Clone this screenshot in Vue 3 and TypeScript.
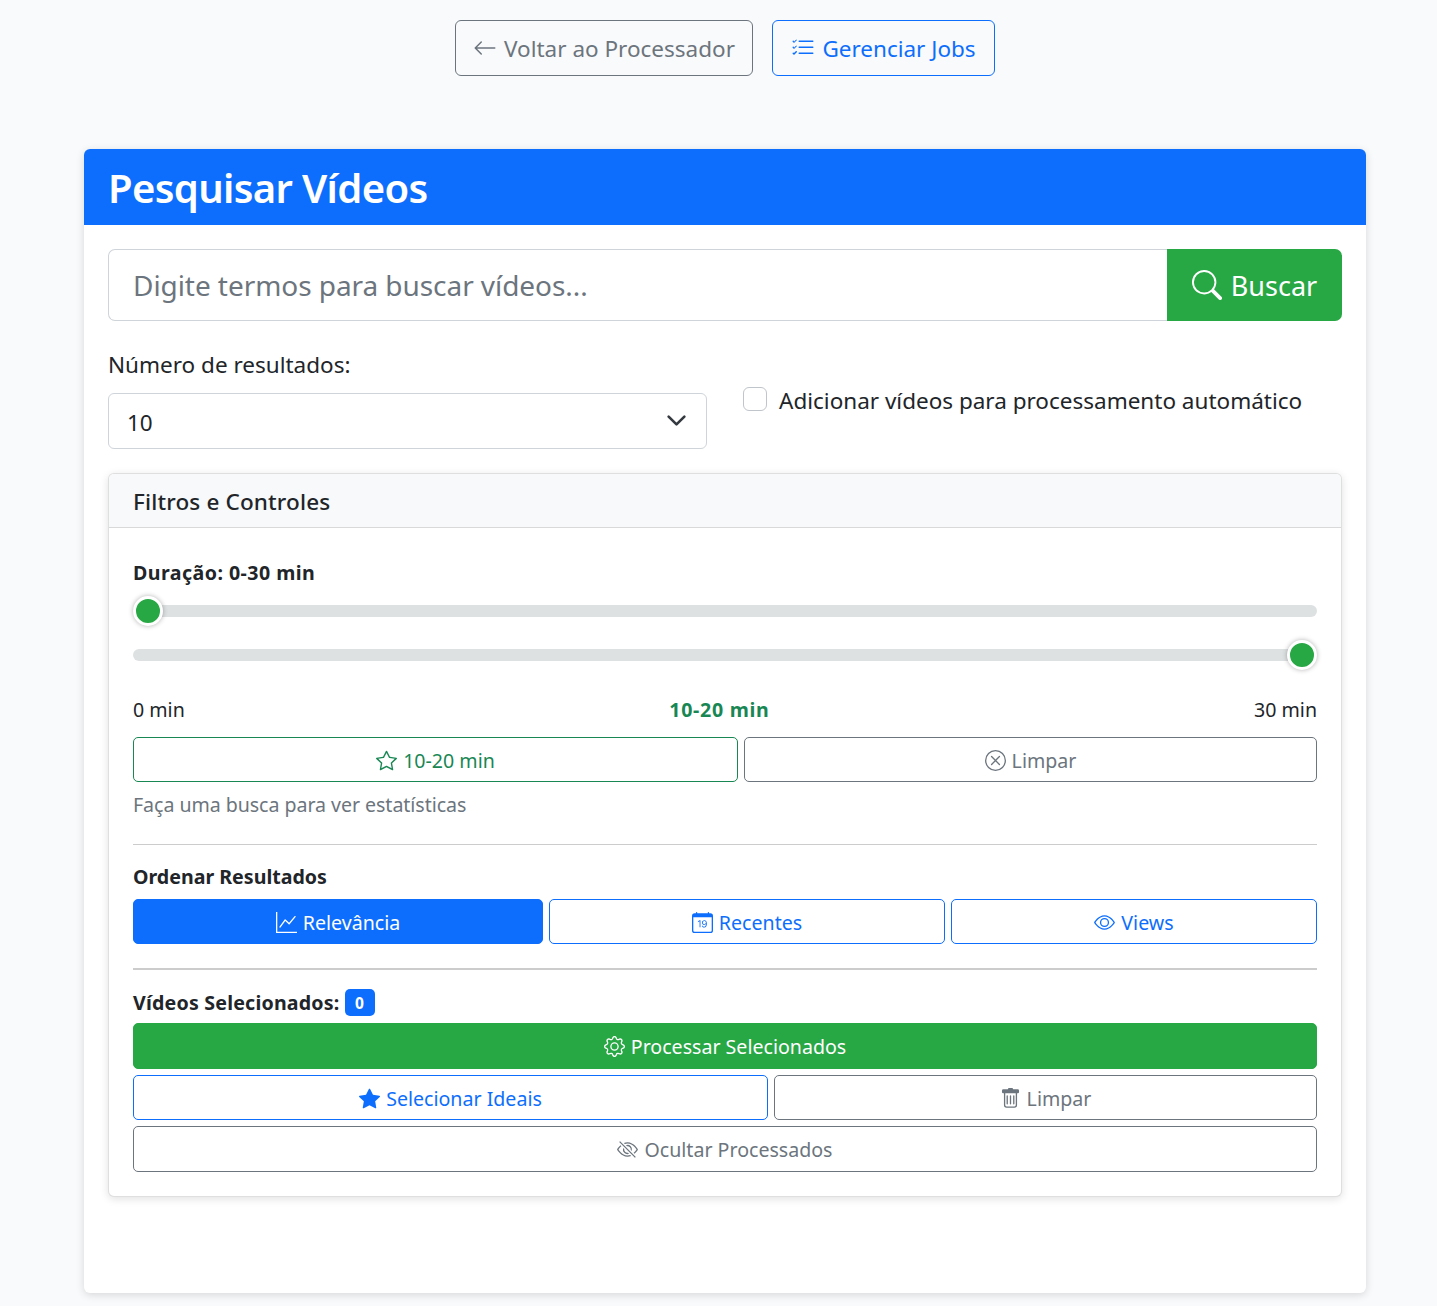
<script setup lang="ts">
const P = {
  arrow: ['M15 8a.5.5 0 0 0-.5-.5H2.707l3.147-3.146a.5.5 0 1 0-.708-.708l-4 4a.5.5 0 0 0 0 .708l4 4a.5.5 0 0 0 .708-.708L2.707 8.5H14.5A.5.5 0 0 0 15 8z'],
  list: ['M5 11.5a.5.5 0 0 1 .5-.5h9a.5.5 0 0 1 0 1h-9a.5.5 0 0 1-.5-.5zm0-4a.5.5 0 0 1 .5-.5h9a.5.5 0 0 1 0 1h-9a.5.5 0 0 1-.5-.5zm0-4a.5.5 0 0 1 .5-.5h9a.5.5 0 0 1 0 1h-9a.5.5 0 0 1-.5-.5zM3.854 2.146a.5.5 0 0 1 0 .708l-1.5 1.5a.5.5 0 0 1-.708 0l-.5-.5a.5.5 0 1 1 .708-.708L2 3.793l1.146-1.147a.5.5 0 0 1 .708 0zm0 4a.5.5 0 0 1 0 .708l-1.5 1.5a.5.5 0 0 1-.708 0l-.5-.5a.5.5 0 1 1 .708-.708L2 7.793l1.146-1.147a.5.5 0 0 1 .708 0zm0 4a.5.5 0 0 1 0 .708l-1.5 1.5a.5.5 0 0 1-.708 0l-.5-.5a.5.5 0 0 1 .708-.708l.146.147 1.146-1.147a.5.5 0 0 1 .708 0z'],
  search: ['M11.742 10.344a6.5 6.5 0 1 0-1.397 1.398h-.001c.03.04.062.078.098.115l3.85 3.85a1 1 0 0 0 1.415-1.414l-3.85-3.85a1.007 1.007 0 0 0-.115-.1zM12 6.5a5.5 5.5 0 1 1-11 0 5.5 5.5 0 0 1 11 0z'],
  star: ['M2.866 14.85c-.078.444.36.791.746.593l4.39-2.256 4.389 2.256c.386.198.824-.149.746-.592l-.83-4.73 3.522-3.356c.33-.314.16-.888-.282-.95l-4.898-.696L8.465.792a.513.513 0 0 0-.927 0L5.354 5.12l-4.898.696c-.441.062-.612.636-.283.95l3.523 3.356-.83 4.73zm4.905-2.767-3.686 1.894.694-3.957a.565.565 0 0 0-.163-.505L1.71 6.745l4.052-.576a.525.525 0 0 0 .393-.288L8 2.223l1.847 3.658a.525.525 0 0 0 .393.288l4.052.575-2.906 2.77a.565.565 0 0 0-.163.506l.694 3.957-3.686-1.894a.503.503 0 0 0-.461 0z'],
  starFill: ['M3.612 15.443c-.386.198-.824-.149-.746-.592l.83-4.73L.173 6.765c-.329-.314-.158-.888.283-.95l4.898-.696L7.538.792c.197-.39.73-.39.927 0l2.184 4.327 4.898.696c.441.062.612.636.282.95l-3.522 3.356.83 4.73c.078.443-.36.79-.746.592L8 13.187l-4.389 2.256z'],
  xCircle: ['M8 15A7 7 0 1 1 8 1a7 7 0 0 1 0 14zm0 1A8 8 0 1 0 8 0a8 8 0 0 0 0 16z', 'M4.646 4.646a.5.5 0 0 1 .708 0L8 7.293l2.646-2.647a.5.5 0 0 1 .708.708L8.707 8l2.647 2.646a.5.5 0 0 1-.708.708L8 8.707l-2.646 2.647a.5.5 0 0 1-.708-.708L7.293 8 4.646 5.354a.5.5 0 0 1 0-.708z'],
  graph: ['M0 0h1v15h15v1H0V0Zm14.817 3.113a.5.5 0 0 1 .07.704l-4.5 5.5a.5.5 0 0 1-.74.037L7.06 6.767l-3.656 5.027a.5.5 0 0 1-.808-.588l4-5.5a.5.5 0 0 1 .758-.06l2.609 2.61 4.15-5.073a.5.5 0 0 1 .704-.07Z'],
  calendar: ['M6.445 11.688V6.354h-.633A12.6 12.6 0 0 0 4.5 7.16v.695c.375-.257.969-.62 1.258-.777h.012v4.61h.675zm1.188-1.305c.047.64.594 1.406 1.703 1.406 1.258 0 2-1.066 2-2.871 0-1.934-.781-2.668-1.953-2.668-.926 0-1.797.672-1.797 1.809 0 1.16.824 1.77 1.676 1.77.746 0 1.23-.376 1.383-.79h.027c-.004 1.316-.461 2.164-1.305 2.164-.664 0-1.008-.45-1.05-.82h-.684zm2.953-2.317c0 .696-.559 1.18-1.184 1.18-.601 0-1.144-.383-1.144-1.2 0-.823.582-1.21 1.168-1.21.633 0 1.16.398 1.16 1.23z', 'M3.5 0a.5.5 0 0 1 .5.5V1h8V.5a.5.5 0 0 1 1 0V1h1a2 2 0 0 1 2 2v11a2 2 0 0 1-2 2H2a2 2 0 0 1-2-2V3a2 2 0 0 1 2-2h1V.5a.5.5 0 0 1 .5-.5zM1 4v10a1 1 0 0 0 1 1h12a1 1 0 0 0 1-1V4H1z'],
  eye: ['M16 8s-3-5.5-8-5.5S0 8 0 8s3 5.5 8 5.5S16 8 16 8zM1.173 8a13.133 13.133 0 0 1 1.66-2.043C4.12 4.668 5.88 3.5 8 3.5c2.12 0 3.879 1.168 5.168 2.457A13.133 13.133 0 0 1 14.828 8c-.058.087-.122.183-.195.288-.335.48-.83 1.12-1.465 1.755C11.879 11.332 10.119 12.5 8 12.5c-2.12 0-3.879-1.168-5.168-2.457A13.134 13.134 0 0 1 1.172 8z', 'M8 5.5a2.5 2.5 0 1 0 0 5 2.5 2.5 0 0 0 0-5zM4.5 8a3.5 3.5 0 1 1 7 0 3.5 3.5 0 0 1-7 0z'],
  gear: ['M8 4.754a3.246 3.246 0 1 0 0 6.492 3.246 3.246 0 0 0 0-6.492zM5.754 8a2.246 2.246 0 1 1 4.492 0 2.246 2.246 0 0 1-4.492 0z', 'M9.796 1.343c-.527-1.79-3.065-1.79-3.592 0l-.094.319a.873.873 0 0 1-1.255.52l-.292-.16c-1.64-.892-3.433.902-2.54 2.541l.159.292a.873.873 0 0 1-.52 1.255l-.319.094c-1.79.527-1.79 3.065 0 3.592l.319.094a.873.873 0 0 1 .52 1.255l-.16.292c-.892 1.64.901 3.434 2.541 2.54l.292-.159a.873.873 0 0 1 1.255.52l.094.319c.527 1.79 3.065 1.79 3.592 0l.094-.319a.873.873 0 0 1 1.255-.52l.292.16c1.64.893 3.434-.902 2.54-2.541l-.159-.292a.873.873 0 0 1 .52-1.255l.319-.094c1.79-.527 1.79-3.065 0-3.592l-.319-.094a.873.873 0 0 1-.52-1.255l.16-.292c.893-1.64-.902-3.433-2.541-2.54l-.292.159a.873.873 0 0 1-1.255-.52l-.094-.319zm-2.633.283c.246-.835 1.428-.835 1.674 0l.094.319a1.873 1.873 0 0 0 2.693 1.115l.291-.16c.764-.415 1.6.42 1.184 1.185l-.159.292a1.873 1.873 0 0 0 1.116 2.692l.318.094c.835.246.835 1.428 0 1.674l-.319.094a1.873 1.873 0 0 0-1.115 2.693l.16.291c.415.764-.42 1.6-1.185 1.184l-.291-.159a1.873 1.873 0 0 0-2.693 1.116l-.094.318c-.246.835-1.428.835-1.674 0l-.094-.319a1.873 1.873 0 0 0-2.692-1.115l-.292.16c-.764.415-1.6-.42-1.184-1.185l.159-.291A1.873 1.873 0 0 0 1.945 8.93l-.319-.094c-.835-.246-.835-1.428 0-1.674l.319-.094A1.873 1.873 0 0 0 3.06 4.377l-.16-.292c-.415-.764.42-1.6 1.185-1.184l.292.159a1.873 1.873 0 0 0 2.692-1.115l.094-.319z'],
  trash: ['M5.5 5.5A.5.5 0 0 1 6 6v6a.5.5 0 0 1-1 0V6a.5.5 0 0 1 .5-.5zm2.5 0a.5.5 0 0 1 .5.5v6a.5.5 0 0 1-1 0V6a.5.5 0 0 1 .5-.5zm3 .5a.5.5 0 0 0-1 0v6a.5.5 0 0 0 1 0V6z', 'M14.5 3a1 1 0 0 1-1 1H13v9a2 2 0 0 1-2 2H5a2 2 0 0 1-2-2V4h-.5a1 1 0 0 1-1-1V2a1 1 0 0 1 1-1H6a1 1 0 0 1 1-1h2a1 1 0 0 1 1 1h3.5a1 1 0 0 1 1 1v1zM4.118 4 4 4.059V13a1 1 0 0 0 1 1h6a1 1 0 0 0 1-1V4.059L11.882 4H4.118zM2.5 3V2h11v1h-11z'],
  eyeSlash: ['M13.359 11.238C15.06 9.72 16 8 16 8s-3-5.5-8-5.5a7.028 7.028 0 0 0-2.79.588l.77.771A5.944 5.944 0 0 1 8 3.5c2.12 0 3.879 1.168 5.168 2.457A13.134 13.134 0 0 1 14.828 8c-.058.087-.122.183-.195.288-.335.48-.83 1.12-1.465 1.755-.165.165-.337.328-.517.486l.708.709z', 'M11.297 9.176a3.5 3.5 0 0 0-4.474-4.474l.823.823a2.5 2.5 0 0 1 2.829 2.829l.822.822zm-2.943 1.299.822.822a3.5 3.5 0 0 1-4.474-4.474l.823.823a2.5 2.5 0 0 0 2.829 2.829z', 'M3.35 5.47c-.18.16-.353.322-.518.487A13.134 13.134 0 0 0 1.172 8l.195.288c.335.48.83 1.12 1.465 1.755C4.121 11.332 5.881 12.5 8 12.5c.716 0 1.39-.133 2.02-.36l.77.772A7.029 7.029 0 0 1 8 13.5C3 13.5 0 8 0 8s.939-1.721 2.641-3.238l.708.709zm10.296 8.884-12-12 .708-.708 12 12-.708.708z'],
}
</script>

<template>
  <div class="page">
    <nav class="topnav">
      <a class="btn top gray">
        <svg class="ic i24" viewBox="0 0 16 16"><path v-for="d in P.arrow" :key="d" :d="d" /></svg>
        <span>Voltar ao Processador</span>
      </a>
      <a class="btn top blue">
        <svg class="ic i24" viewBox="0 0 16 16"><path v-for="d in P.list" :key="d" :d="d" /></svg>
        <span>Gerenciar Jobs</span>
      </a>
    </nav>

    <main class="card">
      <header class="card-head"><h1>Pesquisar Vídeos</h1></header>
      <div class="card-body">
        <div class="search">
          <input class="search-input" type="text" placeholder="Digite termos para buscar vídeos..." />
          <button class="search-btn" type="button">
            <svg class="ic i30" viewBox="0 0 16 16"><path v-for="d in P.search" :key="d" :d="d" /></svg>
            <span>Buscar</span>
          </button>
        </div>

        <div class="opts">
          <div class="opt-left">
            <label class="lbl">Número de resultados:</label>
            <div class="select-wrap">
              <select class="select"><option>10</option></select>
              <svg class="chev" viewBox="0 0 16 16"><path fill="none" stroke="#343a40" stroke-linecap="round" stroke-linejoin="round" stroke-width="2" d="m2 5 6 6 6-6" /></svg>
            </div>
          </div>
          <label class="check">
            <input type="checkbox" />
            <span>Adicionar vídeos para processamento automático</span>
          </label>
        </div>

        <section class="panel">
          <header class="panel-head">Filtros e Controles</header>
          <div class="panel-body">
            <div class="strong dur">Duração: 0-30 min</div>
            <div class="sliders">
              <input class="range" type="range" min="0" max="30" value="0" />
              <input class="range" type="range" min="0" max="30" value="30" />
            </div>
            <div class="scale">
              <span>0 min</span><strong>10-20 min</strong><span>30 min</span>
            </div>
            <div class="row r-dur">
              <button class="btn sm green" type="button">
                <svg class="ic i21" viewBox="0 0 16 16"><path v-for="d in P.star" :key="d" :d="d" /></svg>
                <span>10-20 min</span>
              </button>
              <button class="btn sm gray" type="button">
                <svg class="ic i21" viewBox="0 0 16 16"><path v-for="d in P.xCircle" :key="d" :d="d" /></svg>
                <span>Limpar</span>
              </button>
            </div>
            <p class="muted">Faça uma busca para ver estatísticas</p>
            <hr class="hr1" />
            <div class="strong ord">Ordenar Resultados</div>
            <div class="row r-ord">
              <button class="btn sm solid-blue" type="button">
                <svg class="ic i21" viewBox="0 0 16 16"><path v-for="d in P.graph" :key="d" :d="d" /></svg>
                <span>Relevância</span>
              </button>
              <button class="btn sm blue" type="button">
                <svg class="ic i21" viewBox="0 0 16 16"><path v-for="d in P.calendar" :key="d" :d="d" /></svg>
                <span>Recentes</span>
              </button>
              <button class="btn sm blue" type="button">
                <svg class="ic i21" viewBox="0 0 16 16"><path v-for="d in P.eye" :key="d" :d="d" /></svg>
                <span>Views</span>
              </button>
            </div>
            <hr class="hr2" />
            <div class="sel-title">
              <span class="strong sel-text">Vídeos Selecionados:</span>
              <span class="badge">0</span>
            </div>
            <button class="btn sm solid-green full tall" type="button">
              <svg class="ic i21" viewBox="0 0 16 16"><path v-for="d in P.gear" :key="d" :d="d" /></svg>
              <span>Processar Selecionados</span>
            </button>
            <div class="row r-sel">
              <button class="btn sm blue" type="button">
                <svg class="ic i21" viewBox="0 0 16 16"><path v-for="d in P.starFill" :key="d" :d="d" /></svg>
                <span>Selecionar Ideais</span>
              </button>
              <button class="btn sm gray" type="button">
                <svg class="ic i21" viewBox="0 0 16 16"><path v-for="d in P.trash" :key="d" :d="d" /></svg>
                <span>Limpar</span>
              </button>
            </div>
            <button class="btn sm gray full tall" type="button">
              <svg class="ic i21" viewBox="0 0 16 16"><path v-for="d in P.eyeSlash" :key="d" :d="d" /></svg>
              <span>Ocultar Processados</span>
            </button>
          </div>
        </section>
      </div>
    </main>
  </div>
</template>

<style>
html, body { margin: 0; background: #f9fafc; }
</style>

<style scoped>
* { box-sizing: border-box; }
.page {
  height: 1306px;
  padding: 20px 71px 0 84px;
  background: #f9fafc;
  color: #212529;
  font-family: "Noto Sans", "Open Sans", sans-serif;
  font-size: 22.5px;
  overflow: hidden;
}
.ic { fill: currentColor; flex: none; }
.i21 { width: 21px; height: 21px; }
.i24 { width: 24px; height: 24px; }
.i30 { width: 30px; height: 30px; }

.topnav { display: flex; justify-content: center; gap: 19px; height: 56px; margin-bottom: 73px; }
.btn {
  display: flex;
  align-items: center;
  justify-content: center;
  gap: 6px;
  background: transparent;
  border-width: 1.5px;
  border-style: solid;
  border-radius: 6px;
  font-family: inherit;
}
.top { width: 298px; font-size: 22.5px; padding-top: 1px; gap: 7px; }
.top.blue { width: 223px; }
.top .ic { margin-top: -1px; }
.sm { height: 45px; border-radius: 5px; font-size: 19.6px; padding: 2px 0 0; }
.tall { height: 46px; padding-top: 0; }
.gray { color: #6c757d; border-color: #6c757d; }
.blue { color: #0d6efd; border-color: #0d6efd; }
.green { color: #198754; border-color: #198754; }
.solid-blue { background: #0d6efd; border-color: #0d6efd; color: #fff; }
.solid-green { background: #28a745; border-color: #28a745; color: #fff; }
.full { width: 100%; }

.card {
  height: 1144px;
  background: #fff;
  border-radius: 6px;
  box-shadow: 0 2px 8px rgba(0, 0, 0, .14);
  overflow: hidden;
}
.card-head { height: 76px; padding: 0 24px; background: #0d6efd; display: flex; align-items: center; }
h1 { margin: 0; color: #fff; font-size: 40px; font-weight: 600; letter-spacing: -0.65px; }
.card-body { padding: 24px; }

.search { display: flex; height: 72px; }
.search-input {
  flex: 1;
  min-width: 0;
  border: 1.5px solid #ced4da;
  border-right: 0;
  border-radius: 7px 0 0 7px;
  padding: 0 24px;
  font: inherit;
  font-size: 28px;
  letter-spacing: -0.06px;
  outline: none;
}
.search-input::placeholder { color: #6c757d; opacity: 1; }
.search-btn {
  width: 175px;
  display: flex;
  align-items: center;
  justify-content: center;
  gap: 9px;
  border: 0;
  border-radius: 0 7px 7px 0;
  background: #28a745;
  color: #fff;
  font: inherit;
  font-size: 27px;
}

.opts { display: flex; margin-top: 27px; height: 125px; }
.opt-left { width: 599px; }
.lbl { display: block; height: 45px; line-height: 34px; }
.select-wrap { position: relative; height: 56px; }
.select {
  width: 100%;
  height: 56px;
  appearance: none;
  background: #fff;
  border: 1.5px solid #ced4da;
  border-radius: 6px;
  padding: 2px 18px 0;
  font: inherit;
  color: #212529;
}
.chev { position: absolute; right: 20px; top: 17px; width: 21px; height: 21px; pointer-events: none; }
.check { display: flex; align-items: flex-start; gap: 12px; margin-left: 36px; line-height: 34px; padding-top: 36px; }
.check input {
  appearance: none;
  width: 24px;
  height: 24px;
  margin: 3px 0 0;
  background: #fff;
  border: 1.5px solid #bfc5ca;
  border-radius: 6px;
  flex: none;
}

.panel {
  height: 724px;
  background: #fff;
  border: 1px solid rgba(0, 0, 0, .125);
  border-radius: 6px;
  box-shadow: 0 2px 8px rgba(0, 0, 0, .12);
  overflow: hidden;
}
.panel-head {
  height: 54px;
  padding: 1px 24px 0;
  display: flex;
  align-items: center;
  background: #f8f9fa;
  border-bottom: 1px solid rgba(0, 0, 0, .125);
  font-weight: 500;
  letter-spacing: .15px;
}
.panel-body { padding: 24px 24px 0; font-size: 19.6px; }
.strong { font-weight: 700; color: #212529; }
.dur { height: 44px; line-height: 42px; margin-top: 0; letter-spacing: .45px; }
.sliders { display: flex; flex-direction: column; gap: 14px; height: 74px; }
.range {
  display: block;
  width: 100%;
  height: 30px;
  margin: 0;
  appearance: none;
  -webkit-appearance: none;
  background: transparent;
}
.range::-webkit-slider-runnable-track {
  height: 12px;
  border-radius: 6px;
  background: #dee1e2;
}
.range::-webkit-slider-thumb {
  -webkit-appearance: none;
  width: 30px;
  height: 30px;
  margin-top: -9px;
  border-radius: 50%;
  border: 3px solid #fff;
  background: #28a745;
  box-shadow: 0 0 5px rgba(0, 0, 0, .3);
}
.scale { display: flex; justify-content: space-between; align-items: center; height: 28px; margin-top: 25px; }
.scale strong { color: #198754; font-weight: 700; letter-spacing: .7px; }
.row { display: grid; gap: 6px; }
.r-dur { grid-template-columns: 605px 573px; margin-top: 14px; }
.r-ord { grid-template-columns: 410px 396px 366px; }
.r-sel { grid-template-columns: 635px 543px; margin: 6px 0; }
.muted { margin: 9px 0 0; height: 28px; line-height: 28px; color: #6c757d; letter-spacing: -0.05px; }
.hr1 { margin: 25px 0 0; border: 0; border-top: 1px solid #ccc; }
.ord { height: 54px; line-height: 64px; }
.hr2 { margin: 24px 0 0; border: 0; border-top: 2px solid #ccc; }
.sel-title { display: flex; align-items: center; gap: 5px; height: 53px; padding-top: 12px; }
.sel-text { letter-spacing: .2px; }
.badge {
  width: 30px;
  height: 27px;
  border-radius: 5px;
  background: #0d6efd;
  color: #fff;
  font-size: 15.5px;
  font-weight: 700;
  display: flex;
  align-items: center;
  justify-content: center;
}
</style>
